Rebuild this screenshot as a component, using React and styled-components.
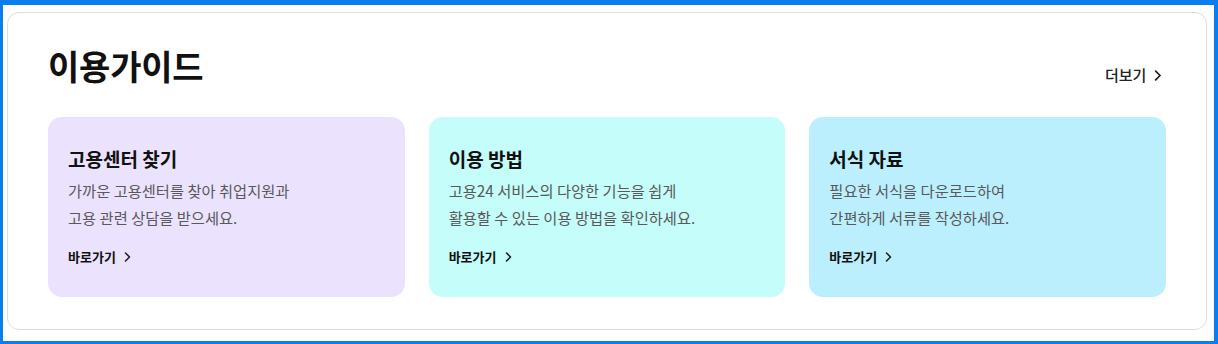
import React from "react";
import styled, { createGlobalStyle } from "styled-components";

const GlobalStyle = createGlobalStyle`
  * { box-sizing: border-box; }
  body {
    margin: 0;
    font-family: "Noto Sans CJK KR", "Noto Sans", sans-serif;
    background: #ffffff;
  }
`;

const Frame = styled.div`
  width: 1218px;
  height: 344px;
  border-style: solid;
  border-color: #0a7eee;
  border-width: 5px 4px 3px 3px;
  padding: 7px 7px 11px 4px;
  background: #ffffff;
`;

const Section = styled.section`
  height: 100%;
  border: 1px solid #dddddd;
  border-radius: 12px;
  padding: 31px 40px 0 40px;
`;

const Header = styled.div`
  display: flex;
  justify-content: space-between;
  align-items: flex-end;
  margin-bottom: 29px;
`;

const Title = styled.h2`
  margin: 0;
  font-size: 34px;
  line-height: 44px;
  font-weight: 700;
  color: #111111;
  letter-spacing: -0.2px;
`;

const MoreLink = styled.a`
  display: flex;
  align-items: center;
  gap: 8px;
  font-size: 15px;
  line-height: 22px;
  font-weight: 500;
  color: #222222;
  text-decoration: none;
  margin-right: 4px;
  margin-bottom: 2px;
`;

const Cards = styled.div`
  display: grid;
  grid-template-columns: repeat(3, 1fr);
  gap: 24px;
`;

const Card = styled.div`
  background: ${(p) => p.$bg};
  border-radius: 14px;
  padding: 28px 20px 30px 20px;
  height: 180px;
`;

const CardTitle = styled.h3`
  margin: 0;
  font-size: 19px;
  line-height: 28px;
  font-weight: 700;
  color: #111111;
`;

const CardDesc = styled.p`
  margin: 4px 0 0 0;
  font-size: 15.3px;
  line-height: 27px;
  font-weight: 400;
  color: #595959;
`;

const GoLink = styled.a`
  display: flex;
  align-items: center;
  gap: 8px;
  margin-top: 16px;
  font-size: 13px;
  line-height: 20px;
  font-weight: 700;
  color: #111111;
  text-decoration: none;
`;

function Chevron({ size = 10 }) {
  return (
    <svg width={size * 0.7} height={size} viewBox="0 0 7 10" fill="none">
      <polyline
        points="1.5,1 5.5,5 1.5,9"
        stroke="#222"
        strokeWidth="1.6"
        strokeLinecap="round"
        strokeLinejoin="round"
      />
    </svg>
  );
}

const guides = [
  {
    title: "고용센터 찾기",
    lines: ["가까운 고용센터를 찾아 취업지원과", "고용 관련 상담을 받으세요."],
    bg: "#ebe3fe",
  },
  {
    title: "이용 방법",
    lines: ["고용24 서비스의 다양한 기능을 쉽게", "활용할 수 있는 이용 방법을 확인하세요."],
    bg: "#c4fdf9",
  },
  {
    title: "서식 자료",
    lines: ["필요한 서식을 다운로드하여", "간편하게 서류를 작성하세요."],
    bg: "#bbeffe",
  },
];

export default function App() {
  return (
    <>
      <GlobalStyle />
      <Frame>
        <Section>
          <Header>
            <Title>이용가이드</Title>
            <MoreLink href="#">
              더보기 <Chevron size={11} />
            </MoreLink>
          </Header>
          <Cards>
            {guides.map((g) => (
              <Card key={g.title} $bg={g.bg}>
                <CardTitle>{g.title}</CardTitle>
                <CardDesc>
                  {g.lines[0]}
                  <br />
                  {g.lines[1]}
                </CardDesc>
                <GoLink href="#">
                  바로가기 <Chevron size={10} />
                </GoLink>
              </Card>
            ))}
          </Cards>
        </Section>
      </Frame>
    </>
  );
}
